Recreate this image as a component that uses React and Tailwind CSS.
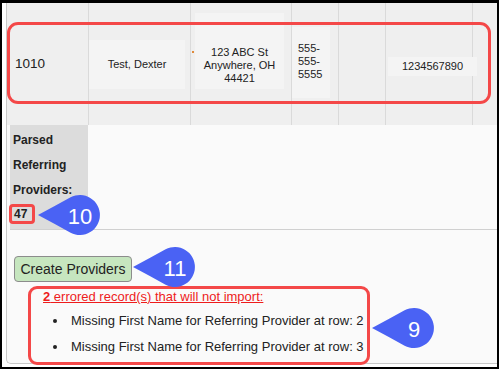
import React from "react";

function Callout({ n, className }) {
  return (
    <svg
      className={className}
      width="64"
      height="44"
      viewBox="0 0 64 44"
    >
      <path
        d="M0 22 Q17 13 32.6 4.3 A20 20 0 1 1 32.6 39.7 Q17 31 0 22 Z"
        fill="#4a62f4"
      />
      <text
        x="42"
        y="23"
        textAnchor="middle"
        dominantBaseline="central"
        fill="#ffffff"
        fontSize="22"
        fontFamily="'Liberation Sans', Arial, sans-serif"
      >
        {n}
      </text>
    </svg>
  );
}

export default function App() {
  return (
    <div
      className="w-[499px] h-[369px] bg-black pt-[3px] pl-[2px] pr-[2px] pb-[2px] overflow-hidden"
      style={{ fontFamily: "'Liberation Sans', Arial, sans-serif" }}
    >
      <div className="h-full bg-white pl-[4px] pb-[3px]">
        <div className="relative h-full border-l border-b border-[#c9c9c9] rounded-bl-[5px] bg-[#fafafa] text-[#222]">
          {/* table */}
          <div className="grid grid-cols-[82px_102px_101px_47px_47px_87px_1fr] h-[122px] bg-[#efefef] text-[11px]">
            <div className="border-r border-[#dadada] flex items-center pl-[8px]">
              <span className="text-[13.5px]">1010</span>
            </div>
            <div className="border-r border-[#dadada] flex items-center">
              <div className="w-[96px] h-[49px] mt-[1px] bg-[#f4f4f4] flex items-center justify-center">
                Test, Dexter
              </div>
            </div>
            <div className="border-r border-[#dadada] flex items-start relative">
              <span className="absolute left-[1px] top-[48px] w-[2px] h-[2px] bg-[#e08a3a]"></span>
              <div className="ml-[4px] mt-[10px] w-[89px] h-[76px] bg-[#f4f4f4] pt-[33px] text-center leading-[13px]">
                123 ABC St
                <br />
                Anywhere, OH
                <br />
                44421
              </div>
            </div>
            <div className="border-r border-[#dadada] flex items-start">
              <div className="mt-[24px] w-[38px] h-[71px] bg-[#f4f4f4] pt-[15px] pl-[6px] leading-[13px]">
                555-
                <br />
                555-
                <br />
                5555
              </div>
            </div>
            <div className="border-r border-[#dadada]"></div>
            <div className="border-r border-[#dadada] flex items-start">
              <div className="ml-[2px] mt-[54px] w-[89px] h-[19px] shrink-0 bg-[#f4f4f4] flex items-center justify-center">
                1234567890
              </div>
            </div>
            <div></div>
          </div>

          {/* parsed */}
          <div className="ml-[3px] border-b border-[#d0d0d0]">
            <div className="w-[78px] h-[104px] bg-[#dcdcdc] pt-[3px] pl-[3px] text-[12px] font-bold">
              <div className="leading-[25px]">Parsed</div>
              <div className="leading-[25px]">Referring</div>
              <div className="leading-[25px]">Providers:</div>
              <div className="mt-[1px] -ml-[4px] inline-block border-[3px] border-[#f44848] rounded-[4px] pl-[2px] pr-[5px] leading-[14px]">
                47
              </div>
            </div>
          </div>

          {/* button */}
          <div className="pt-[26px] pl-[7px]">
            <button className="w-[118px] h-[26px] bg-[#c6e6bf] border border-[#8c8c8c] rounded-[4px] text-[14px] text-[#222] flex items-center justify-center">
              Create Providers
            </button>
          </div>

          {/* errors */}
          <div className="ml-[21px] mt-[4px] w-[342px] h-[79px] border-[3px] border-[#f44848] rounded-[9px] text-[13px]">
            <div className="pl-[12px] leading-[16px] text-[#ee1c1c] underline">
              <span className="font-bold">2</span> errored record(s) that will not import:
            </div>
            <ul className="mt-[3px]">
              <li className="flex items-center h-[26px]">
                <span className="ml-[22px] mr-[14px] w-[4px] h-[4px] rounded-full bg-[#222]"></span>
                Missing First Name for Referring Provider at row: 2
              </li>
              <li className="flex items-center h-[26px]">
                <span className="ml-[22px] mr-[14px] w-[4px] h-[4px] rounded-full bg-[#222]"></span>
                Missing First Name for Referring Provider at row: 3
              </li>
            </ul>
          </div>

          {/* highlight overlay for row */}
          <div className="absolute left-[0px] top-[19px] w-[484px] h-[82px] border-[3px] border-[#f44848] rounded-[11px]"></div>

          <Callout n="10" className="absolute left-[31px] top-[190px]" />
          <Callout n="11" className="absolute left-[126px] top-[242px]" />
          <Callout n="9" className="absolute left-[365px] top-[303px]" />
        </div>
      </div>
    </div>
  );
}
